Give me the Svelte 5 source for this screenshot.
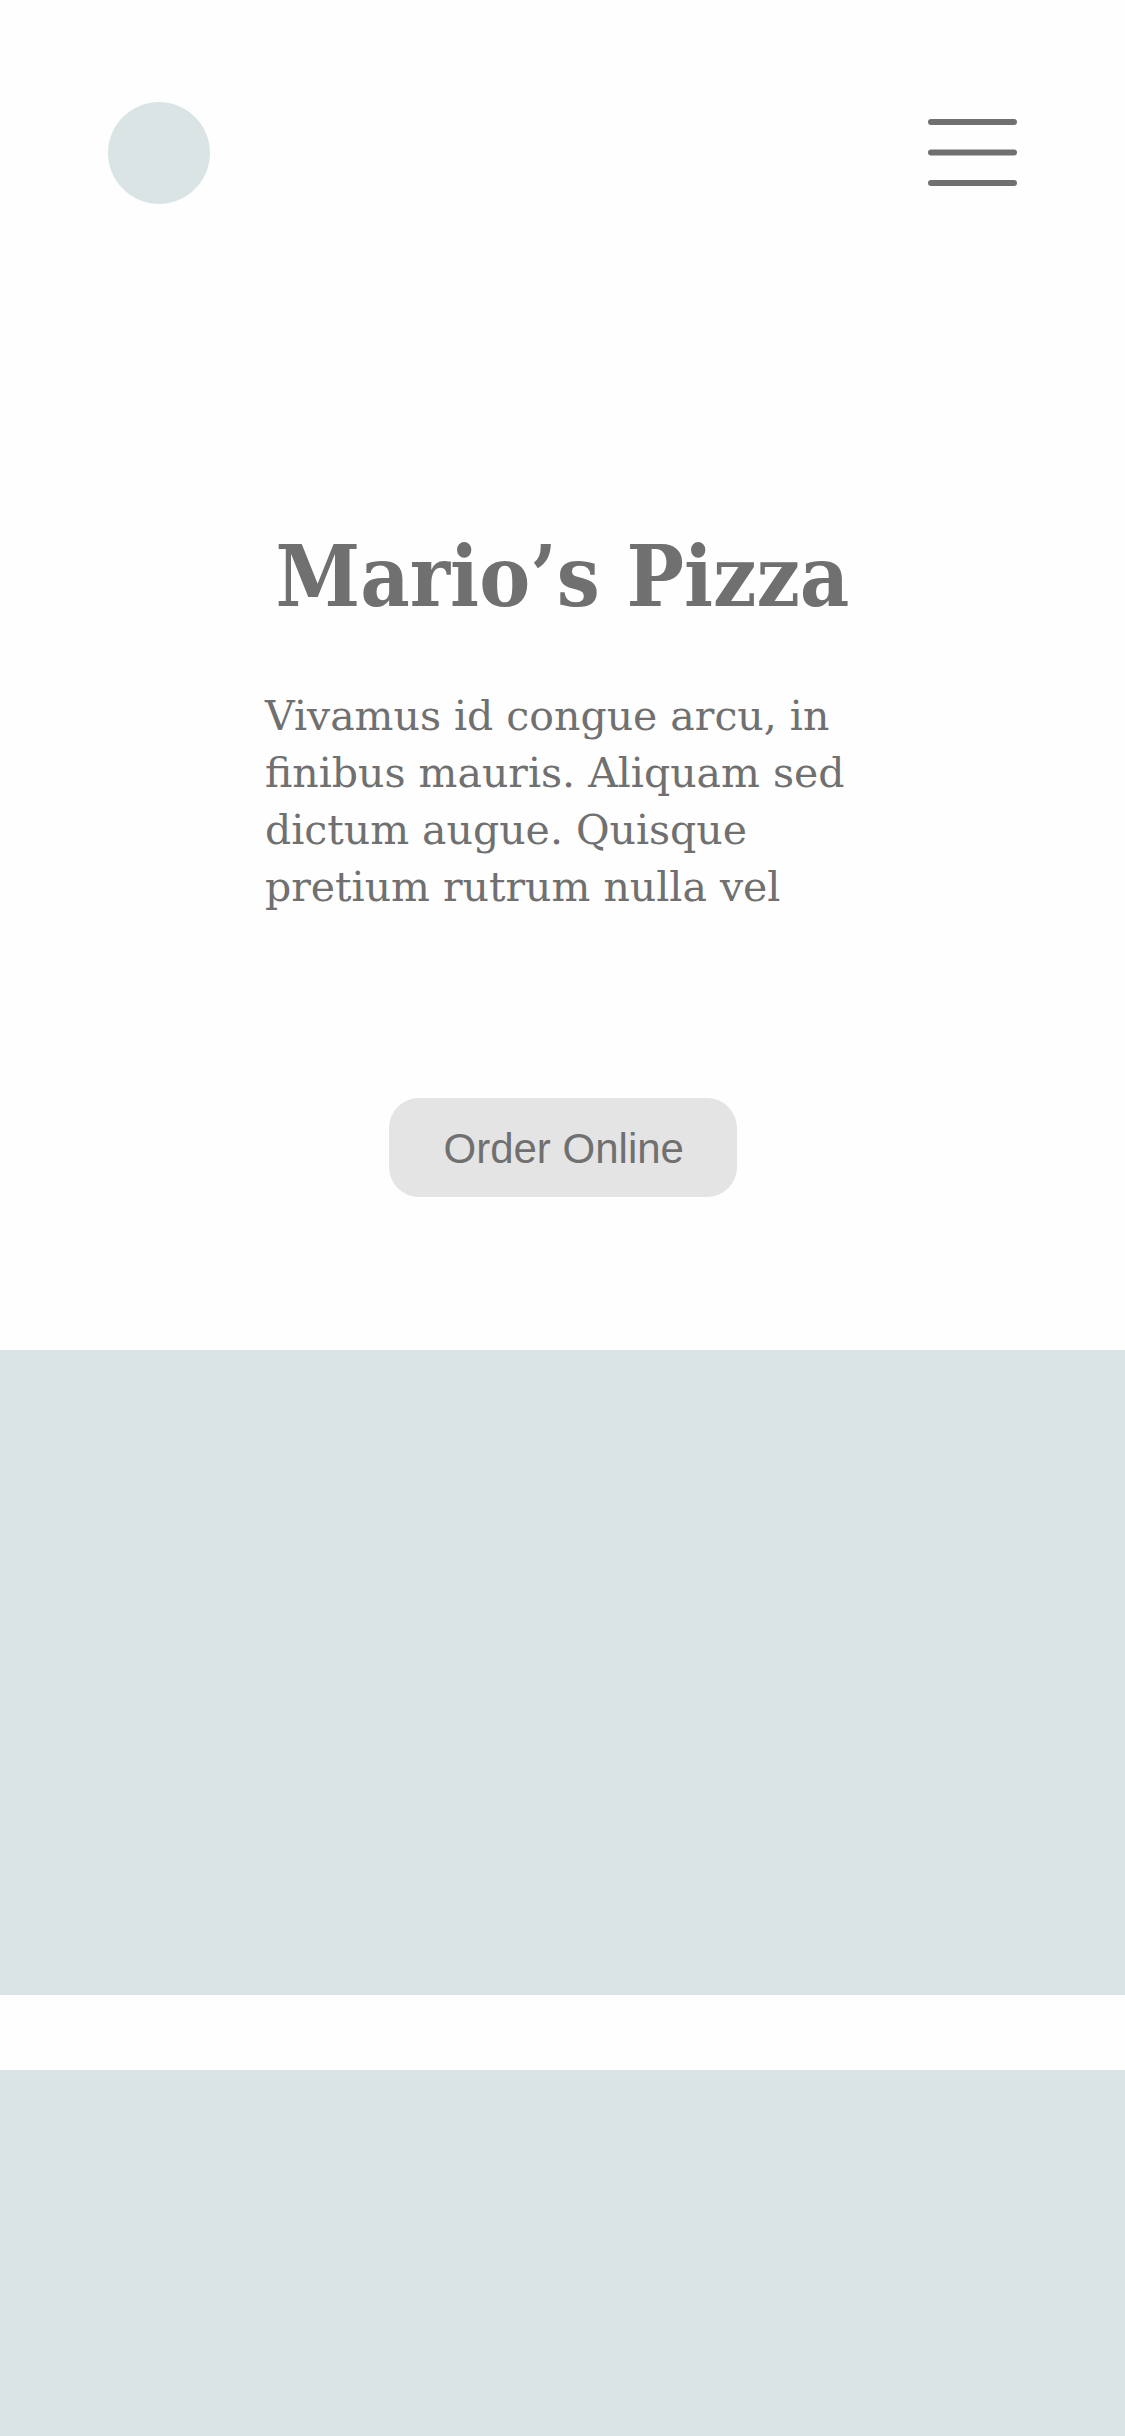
<script>
  const lines = [
    'Vivamus id congue arcu, in',
    'finibus mauris. Aliquam sed',
    'dictum augue. Quisque',
    'pretium rutrum nulla vel',
  ];
</script>

<div class="page">
  <header>
    <a class="logo" href="#home" aria-label="Home"></a>
    <button class="menu" type="button" aria-label="Menu">
      <svg viewBox="0 0 89 68" width="89" height="68" aria-hidden="true">
        <path d="M3 3H86M3 33.5H86M3 64H86" />
      </svg>
    </button>
  </header>

  <main>
    <section class="hero">
      <h1>Mario’s Pizza</h1>
      <p>
        {#each lines as line}
          <span>{line}</span>
        {/each}
      </p>
      <button class="order" type="button">Order Online</button>
    </section>
    <section class="panel"></section>
    <section class="panel last"></section>
  </main>
</div>

<style>
  :global(body) {
    background: #fefefe;
  }

  .page {
    display: flex;
    flex-direction: column;
    min-height: 100vh;
    color: #707070;
  }

  header {
    display: flex;
    align-items: center;
    justify-content: space-between;
    padding: 102px 108px 0;
  }

  .logo {
    width: 102px;
    height: 102px;
    border-radius: 50%;
    background: #dbe4e4;
  }

  .menu {
    display: flex;
    padding: 0;
    border: 0;
    background: none;
    color: inherit;
    cursor: pointer;
  }

  .menu path {
    fill: none;
    stroke: currentColor;
    stroke-width: 6;
    stroke-linecap: round;
  }

  main {
    display: flex;
    flex: 1;
    flex-direction: column;
  }

  .hero {
    display: flex;
    flex-direction: column;
    align-items: center;
    padding: 322px 24px 153px;
  }

  h1 {
    margin: 0;
    font: bold 85px/100px 'DejaVu Serif Condensed', 'DejaVu Serif', serif;
    white-space: nowrap;
  }

  p {
    margin: 62px 0 0;
    width: 595px;
    max-width: 100%;
    font: 41px/57px 'DejaVu Serif', serif;
  }

  p span {
    display: block;
    white-space: nowrap;
  }

  .order {
    margin-top: 182px;
    padding: 2px 55px 0;
    width: 348px;
    height: 99px;
    border: 0;
    border-radius: 30px;
    background: #e4e4e4;
    color: inherit;
    font: 42px/48px 'Liberation Sans', sans-serif;
    white-space: nowrap;
    cursor: pointer;
  }

  .panel {
    min-height: 645px;
    background: #dbe4e4;
  }

  .last {
    flex: 1;
    min-height: 366px;
    margin-top: 75px;
  }
</style>
